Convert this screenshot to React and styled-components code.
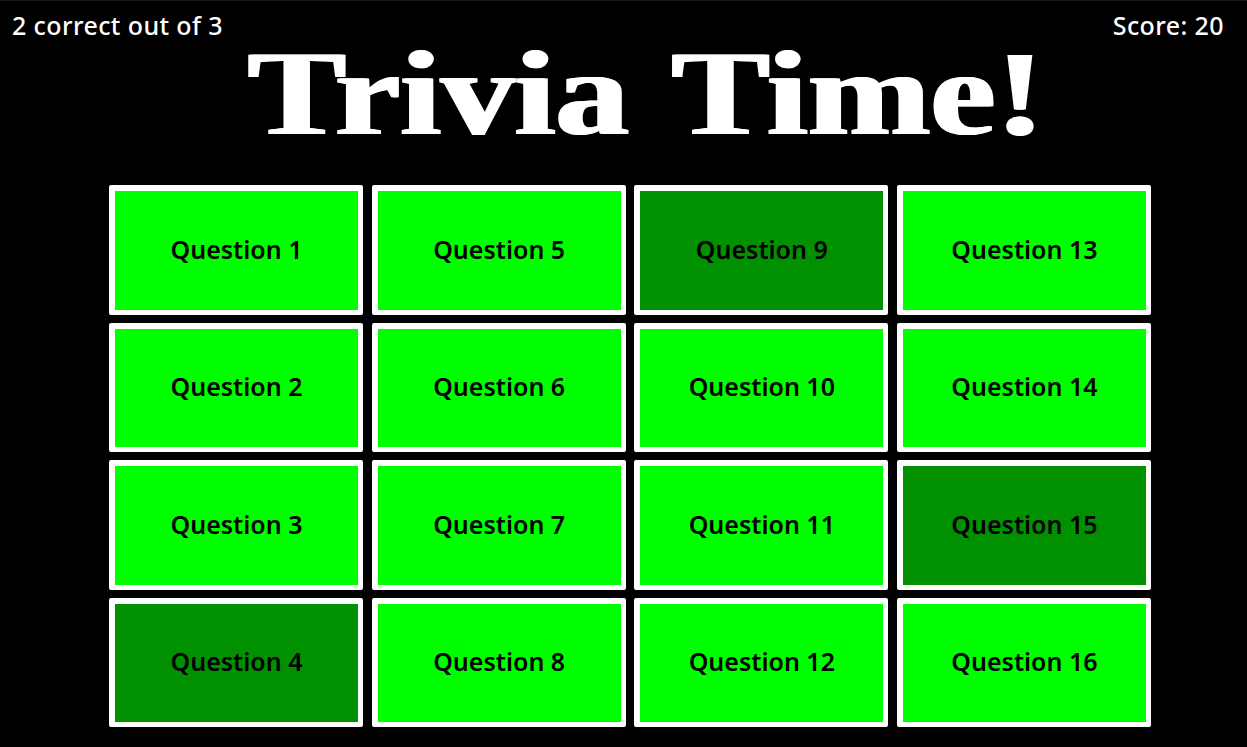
import React from "react";
import styled, { createGlobalStyle } from "styled-components";

const GlobalStyle = createGlobalStyle`
  html, body {
    margin: 0;
    padding: 0;
    background: #000;
  }
`;

const darkQuestions = [4, 9, 15];

const App = () => {
  const questions = Array.from({ length: 16 }, (_, i) => i + 1);
  return (
    <>
      <GlobalStyle />
      <Page>
        <StatusBar>
          <span>2 correct out of 3</span>
          <span>Score: 20</span>
        </StatusBar>
        <Title>Trivia Time!</Title>
        <Board>
          {questions.map((n) => (
            <Tile key={n} $answered={darkQuestions.includes(n)}>
              Question {n}
            </Tile>
          ))}
        </Board>
      </Page>
    </>
  );
};
export default App;

const Page = styled.div`
  width: 1247px;
  height: 747px;
  box-sizing: border-box;
  overflow: hidden;
  background: #000;
  border-top: 1px solid #1c1c1c;
  display: flex;
  flex-direction: column;
`;

const StatusBar = styled.div`
  display: flex;
  justify-content: space-between;
  height: 48px;
  padding: 10px 23px 0 12px;
  box-sizing: border-box;
  color: #fff;
  font: 500 25px/28px "Noto Sans", sans-serif;
  letter-spacing: 0.4px;
`;

const Title = styled.h1`
  margin: 0;
  height: 136px;
  padding-left: 37px;
  box-sizing: border-box;
  text-align: center;
  color: #fff;
  font: 700 120px/89px "Liberation Serif", serif;
  word-spacing: 7px;
  text-shadow: 1.5px 0 #fff, -1.5px 0 #fff;
  white-space: nowrap;
  transform: scaleX(1.225);
`;

const Board = styled.div`
  display: grid;
  grid-template-columns: repeat(4, 254px);
  grid-auto-flow: column;
  grid-template-rows: repeat(4, 129.5px);
  column-gap: 8.67px;
  row-gap: 8px;
  padding-left: 109px;
`;

const Tile = styled.div`
  display: flex;
  align-items: center;
  justify-content: center;
  box-sizing: border-box;
  border-style: solid;
  border-color: #fff;
  border-width: 6px 5px 5px 6px;
  border-radius: 2px;
  padding-bottom: 2px;
  background: ${(props) => (props.$answered ? "#009000" : "#00ff00")};
  color: #000;
  font: 600 25px/1 "Noto Sans", sans-serif;
`;
